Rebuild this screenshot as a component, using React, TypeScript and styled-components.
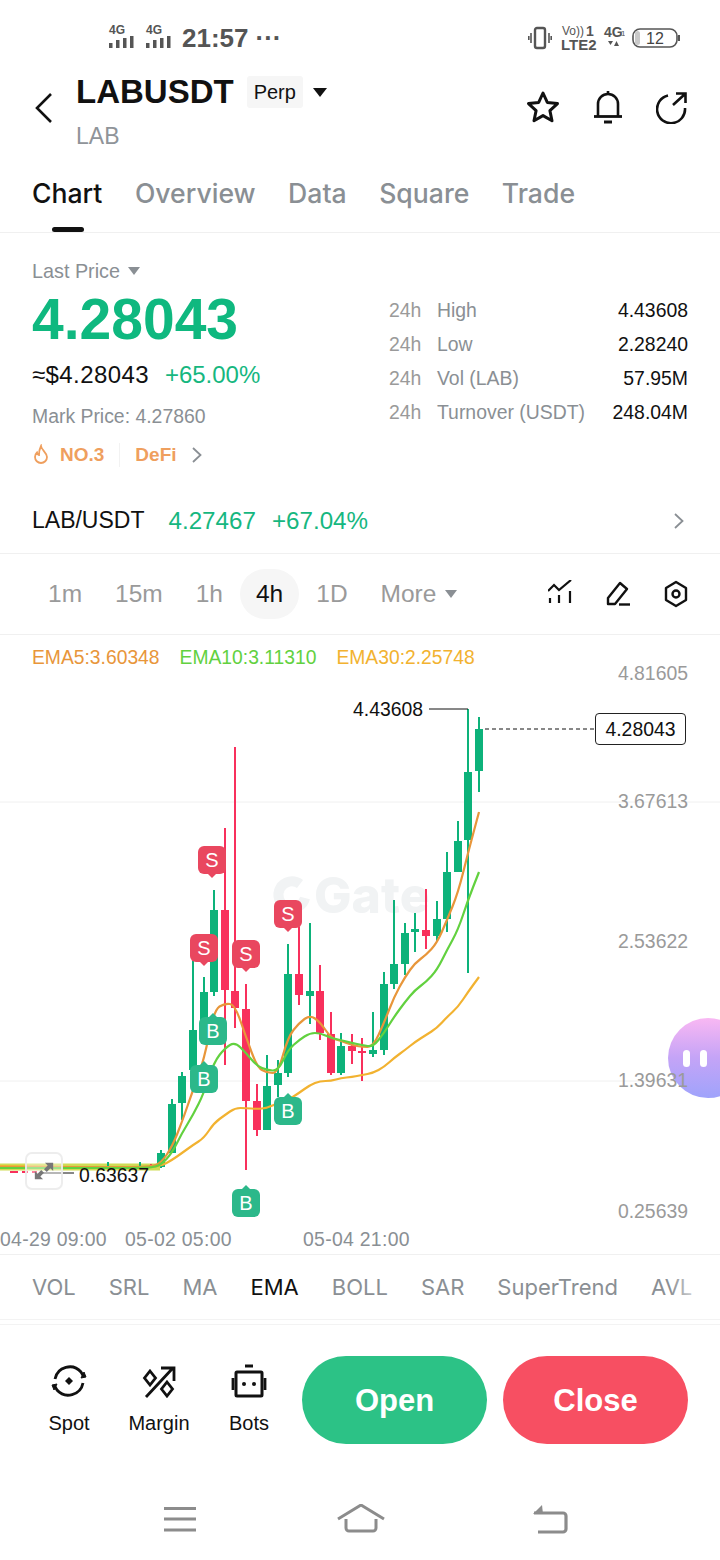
import React from "react";
import styled, { createGlobalStyle } from "styled-components";

const GlobalStyle = createGlobalStyle`
  html, body {
    margin: 0;
    padding: 0;
    background: #fff;
  }
  body {
    font-family: "Liberation Sans", Arial, sans-serif;
    color: #111;
  }
  * {
    box-sizing: border-box;
  }
`;

const Page = styled.div`
  width: 720px;
  height: 1560px;
  overflow: hidden;
  background: #fff;
`;

const StatusBar = styled.div`
  height: 70px;
  padding: 6px 40px 0 108px;
  display: flex;
  align-items: center;
  justify-content: space-between;
  color: #555;
`;

const StatusGroup = styled.div`
  display: flex;
  align-items: center;
  gap: 7px;
`;

const Clock = styled.span`
  font-size: 26px;
  font-weight: 700;
`;

const Header = styled.div`
  height: 92px;
  padding: 0 32px;
  display: flex;
  align-items: flex-start;
`;

const BackSlot = styled.div`
  width: 44px;
  padding-top: 22px;
`;

const TitleBlock = styled.div`
  flex: 1;
`;

const TitleRow = styled.div`
  display: flex;
  align-items: center;
  height: 44px;
`;

const Symbol = styled.span`
  font-size: 33px;
  font-weight: 700;
  margin-right: 13px;
`;

const PerpTag = styled.span`
  background: #f6f6f6;
  border-radius: 3px;
  padding: 0 7px;
  height: 32px;
  line-height: 32px;
  font-size: 20px;
  margin-right: 10px;
`;

const SubTitle = styled.div`
  font-size: 23px;
  color: #8f9499;
  margin-top: 9px;
`;

const HeaderActions = styled.div`
  display: flex;
  gap: 32px;
  padding-top: 20px;
`;

const Tabs = styled.div`
  height: 71px;
  padding: 0 32px;
  display: flex;
  gap: 32.5px;
  border-bottom: 1px solid #f0f0f0;
  font-family: Inter, "Liberation Sans", sans-serif;
`;

const Tab = styled.div<{ $active?: boolean }>`
  position: relative;
  font-size: 26.6px;
  font-weight: 500;
  line-height: 62px;
  color: ${(p) => (p.$active ? "#111" : "#8a8f94")};
  &::after {
    content: "";
    display: ${(p) => (p.$active ? "block" : "none")};
    position: absolute;
    left: 20px;
    bottom: 0;
    width: 32px;
    height: 5px;
    border-radius: 3px;
    background: #111;
  }
`;

const Summary = styled.div`
  height: 240px;
  padding: 26px 32px 0;
  display: flex;
  justify-content: space-between;
`;

const PriceCol = styled.div`
  display: flex;
  flex-direction: column;
`;

const LastPrice = styled.div`
  display: flex;
  align-items: center;
  gap: 8px;
  font-size: 19.8px;
  line-height: 24px;
  color: #8a8f94;
`;

const Caret = styled.span<{ $color?: string; $size?: number }>`
  display: inline-block;
  width: 0;
  height: 0;
  border-left: ${(p) => p.$size ?? 6}px solid transparent;
  border-right: ${(p) => p.$size ?? 6}px solid transparent;
  border-top: ${(p) => (p.$size ?? 6) + 2}px solid ${(p) => p.$color ?? "#8a8f94"};
`;

const BigPrice = styled.div`
  font-size: 57px;
  font-weight: 700;
  line-height: 70px;
  margin-top: 1px;
  color: #0fb87f;
`;

const UsdRow = styled.div`
  display: flex;
  gap: 16px;
  font-size: 24px;
  line-height: 30px;
  margin-top: 6px;
`;

const UsdValue = styled.span`
  letter-spacing: 0.4px;
`;

const Change = styled.span`
  color: #16b77f;
`;

const MarkPrice = styled.div`
  font-size: 19.4px;
  line-height: 24px;
  color: #8a8f94;
  margin-top: 14px;
`;

const TagRow = styled.div`
  display: flex;
  align-items: center;
  margin-top: 15px;
  height: 24px;
  color: #ef9f5e;
  font-size: 19px;
  font-weight: 700;
`;

const TagText = styled.span<{ $left?: number; $right?: number }>`
  margin-left: ${(p) => p.$left ?? 0}px;
  margin-right: ${(p) => p.$right ?? 0}px;
`;

const TagDivider = styled.span`
  width: 1px;
  height: 24px;
  background: #f2f2f2;
  margin: 0 15px;
`;

const StatsCol = styled.div`
  width: 299px;
  padding-top: 34px;
  display: flex;
  flex-direction: column;
`;

const StatRow = styled.div`
  height: 34px;
  display: flex;
  align-items: center;
  font-size: 19.4px;
`;

const StatPeriod = styled.span`
  width: 48px;
  color: #9a9a9a;
`;

const StatLabel = styled.span`
  flex: 1;
  color: #8a8f94;
`;

const StatValue = styled.span`
  color: #111;
`;

const SpotRow = styled.div`
  height: 81px;
  padding: 15px 32px 0;
  display: flex;
  align-items: center;
  font-size: 24.2px;
  border-bottom: 1px solid #f0f0f0;
`;

const SpotPair = styled.span`
  font-size: 23px;
  margin-right: 24px;
`;

const SpotValue = styled.span`
  color: #16b77f;
  margin-right: 16px;
`;

const SpotChevron = styled.div`
  margin-left: auto;
  margin-right: 3px;
  display: flex;
`;

const Intervals = styled.div`
  height: 81px;
  padding: 0 32px;
  display: flex;
  align-items: center;
  gap: 1px;
  border-bottom: 1px solid #f0f0f0;
`;

const Interval = styled.div<{ $active?: boolean }>`
  height: 50px;
  padding: 0 16px;
  line-height: 50px;
  border-radius: 25px;
  font-size: 24.5px;
  display: flex;
  align-items: center;
  gap: 9px;
  color: ${(p) => (p.$active ? "#111" : "#9a9a9a")};
  background: ${(p) => (p.$active ? "#f6f6f6" : "transparent")};
`;

const ChartTools = styled.div`
  margin-left: auto;
  display: flex;
  gap: 34px;
`;

const Chart = styled.div`
  position: relative;
  height: 620px;
  border-bottom: 1px solid #f0f0f0;
  overflow: hidden;
`;

const ChartSvg = styled.svg`
  position: absolute;
  left: 0;
  top: 0;
`;

const Legend = styled.div`
  position: absolute;
  left: 32px;
  top: 12px;
  display: flex;
  gap: 20px;
  font-size: 19.3px;
`;

const LegendItem = styled.span<{ $color: string }>`
  color: ${(p) => p.$color};
`;

const Watermark = styled.div`
  position: absolute;
  left: 314px;
  top: 232px;
  font-family: Inter, sans-serif;
  font-size: 50px;
  font-weight: 800;
  color: #f1f3f4;
  line-height: 56px;
`;

const AxisLabel = styled.div<{ $y: number }>`
  position: absolute;
  right: 32px;
  top: ${(p) => p.$y}px;
  font-size: 19.4px;
  line-height: 22px;
  color: #9a9a9a;
  z-index: 2;
`;

const DateLabel = styled.div<{ $x: number }>`
  position: absolute;
  left: ${(p) => p.$x}px;
  top: 593px;
  font-size: 19.4px;
  line-height: 22px;
  color: #8a8f94;
  letter-spacing: 0.3px;
`;

const PriceNote = styled.div<{ $x: number; $y: number }>`
  position: absolute;
  left: ${(p) => p.$x}px;
  top: ${(p) => p.$y}px;
  font-size: 19.4px;
  line-height: 22px;
  color: #111;
`;

const PriceTag = styled.div`
  position: absolute;
  left: 595px;
  top: 78px;
  width: 91px;
  height: 32px;
  border: 1px solid #222;
  border-radius: 4px;
  background: #fff;
  font-size: 19.4px;
  line-height: 30px;
  text-align: center;
`;

const Marker = styled.div<{ $x: number; $y: number; $kind: "S" | "B" }>`
  position: absolute;
  left: ${(p) => p.$x - 14}px;
  top: ${(p) => p.$y - 14}px;
  width: 28px;
  height: 28px;
  border-radius: 6px;
  background: ${(p) => (p.$kind === "S" ? "#e9475f" : "#2cb88a")};
  color: #fff;
  font-size: 20px;
  line-height: 28px;
  text-align: center;
  &::after {
    content: "";
    position: absolute;
    left: 10px;
    ${(p) => (p.$kind === "S" ? "top: 28px;" : "top: -4px;")}
    border-left: 4px solid transparent;
    border-right: 4px solid transparent;
    ${(p) =>
      p.$kind === "S"
        ? "border-top: 4px solid #e9475f;"
        : "border-bottom: 4px solid #2cb88a;"}
  }
`;

const ExpandButton = styled.div`
  position: absolute;
  left: 25px;
  top: 517px;
  width: 38px;
  height: 38px;
  border: 2px solid rgba(235, 235, 235, 0.9);
  border-radius: 7px;
  background: rgba(255, 255, 255, 0.4);
  display: flex;
  align-items: center;
  justify-content: center;
`;

const Bubble = styled.div`
  position: absolute;
  left: 668px;
  top: 383px;
  width: 80px;
  height: 80px;
  border-radius: 50%;
  background: linear-gradient(180deg, #f9b8f3 0%, #c4a4f7 50%, #9fa3fb 100%);
  display: flex;
  padding-left: 15px;
  gap: 10px;
  align-items: center;
`;

const BubbleEye = styled.span`
  width: 7px;
  height: 17px;
  border-radius: 4px;
  background: #fff;
`;

const Indicators = styled.div`
  height: 65px;
  padding: 0 0 0 32px;
  display: flex;
  align-items: center;
  gap: 33px;
  overflow: hidden;
  border-bottom: 1px solid #f3f3f3;
  font-family: Inter, "Liberation Sans", sans-serif;
  font-size: 22px;
  position: relative;
  &::after {
    content: "";
    position: absolute;
    right: 0;
    top: 0;
    width: 50px;
    height: 60px;
    background: linear-gradient(90deg, rgba(255, 255, 255, 0), #fff 80%);
  }
`;

const Indicator = styled.span<{ $active?: boolean }>`
  flex: none;
  color: ${(p) => (p.$active ? "#111" : "#8a8f94")};
`;

const Actions = styled.div`
  height: 180px;
  margin-top: 4px;
  border-top: 1px solid #f3f3f3;
  padding: 31px 32px 0 24px;
  display: flex;
  align-items: flex-start;
`;

const ToolList = styled.div`
  display: flex;
  width: 270px;
`;

const Tool = styled.div`
  width: 90px;
  padding-top: 8px;
  display: flex;
  flex-direction: column;
  align-items: center;
  gap: 14px;
  font-size: 20px;
  line-height: 22px;
`;

const TradeButton = styled.div<{ $color: string }>`
  width: 185px;
  height: 88px;
  border-radius: 44px;
  background: ${(p) => p.$color};
  color: #fff;
  font-size: 31px;
  font-weight: 700;
  line-height: 90px;
  text-align: center;
`;

const TradeButtons = styled.div`
  margin-left: 8px;
  display: flex;
  gap: 16px;
`;

const NavBar = styled.div`
  height: 56px;
  padding-left: 163px;
  display: grid;
  grid-template-columns: 174px 195px 36px;
`;

type Candle = [number, number, number, number, number, "g" | "r"];

const GREEN = "#0db27a";
const RED = "#f8305c";

const candles: Candle[] = [
  [161, 1150, 1168, 1153, 1167, "g"],
  [172, 1099, 1153, 1104, 1153, "g"],
  [182, 1072, 1120, 1076, 1103, "g"],
  [193, 961, 1075, 1030, 1070, "g"],
  [204, 977, 1030, 992, 1027, "g"],
  [214, 890, 996, 910, 992, "g"],
  [225, 828, 1065, 910, 990, "r"],
  [235, 747, 1028, 991, 1008, "r"],
  [246, 984, 1170, 1009, 1101, "r"],
  [257, 1084, 1136, 1101, 1130, "r"],
  [267, 1055, 1130, 1086, 1130, "g"],
  [278, 1060, 1097, 1073, 1085, "g"],
  [288, 944, 1077, 974, 1073, "g"],
  [299, 927, 1005, 974, 995, "r"],
  [310, 923, 1024, 991, 996, "g"],
  [320, 965, 1040, 991, 1033, "r"],
  [331, 1012, 1075, 1034, 1073, "r"],
  [341, 1033, 1075, 1046, 1073, "g"],
  [352, 1034, 1064, 1046, 1051, "r"],
  [362, 1038, 1081, 1051, 1053, "r"],
  [373, 1012, 1057, 1050, 1054, "g"],
  [384, 972, 1055, 984, 1050, "g"],
  [394, 900, 989, 964, 984, "g"],
  [405, 923, 975, 933, 964, "g"],
  [415, 913, 952, 929, 932, "g"],
  [426, 889, 949, 930, 936, "r"],
  [437, 901, 941, 919, 936, "g"],
  [447, 852, 932, 872, 919, "g"],
  [458, 821, 872, 841, 872, "g"],
  [468, 709, 973, 772, 840, "g"],
  [479, 717, 792, 729, 771, "g"],
];

const ema5 =
  "0,1167 100,1167 150,1167 161,1163 172,1147 182,1122 193,1090 204,1060 214,1010 225,1003 235,1005 246,1037 257,1067 267,1073 278,1073 288,1037 299,1023 310,1015 320,1022 331,1038 341,1041 352,1045 362,1047 373,1047 384,1023 394,997 405,977 415,963 426,955 437,943 447,920 458,893 468,853 479,812";
const ema10 =
  "0,1168 100,1168 150,1168 161,1165 172,1153 182,1133 193,1115 204,1093 214,1062 225,1048 235,1042 246,1053 257,1066 267,1070 278,1071 288,1050 299,1040 310,1033 320,1033 331,1038 341,1040 352,1043 362,1045 373,1047 384,1033 394,1017 405,1002 415,990 426,982 437,970 447,950 458,930 468,900 479,872";
const ema30 =
  "0,1166 100,1167 140,1168 161,1166 172,1160 182,1153 193,1145 204,1138 214,1123 225,1115 235,1108 246,1108 257,1109 267,1108 278,1103 288,1100 299,1093 310,1085 320,1081 331,1081 341,1078 352,1077 362,1075 373,1073 384,1067 394,1058 405,1050 415,1042 426,1035 437,1028 447,1017 458,1007 468,992 479,977";

// rounds the corners of a line through its segment midpoints
const smoothPath = (points: string) => {
  const pts = points.split(" ").map((p) => p.split(",").map(Number));
  let d = `M${pts[0][0]} ${pts[0][1]}`;
  for (let i = 1; i < pts.length - 1; i++) {
    const mx = (pts[i][0] + pts[i + 1][0]) / 2;
    const my = (pts[i][1] + pts[i + 1][1]) / 2;
    d += `Q${pts[i][0]} ${pts[i][1]} ${mx} ${my}`;
  }
  const last = pts[pts.length - 1];
  return `${d}L${last[0]} ${last[1]}`;
};

const markers: { x: number; y: number; kind: "S" | "B" }[] = [
  { x: 212, y: 225, kind: "S" },
  { x: 204, y: 313, kind: "S" },
  { x: 246, y: 319, kind: "S" },
  { x: 288, y: 279, kind: "S" },
  { x: 213, y: 396, kind: "B" },
  { x: 204, y: 444, kind: "B" },
  { x: 288, y: 476, kind: "B" },
  { x: 246, y: 568, kind: "B" },
];

const stats = [
  ["High", "4.43608"],
  ["Low", "2.28240"],
  ["Vol (LAB)", "57.95M"],
  ["Turnover (USDT)", "248.04M"],
];

const axis = [
  ["4.81605", 27],
  ["3.67613", 155],
  ["2.53622", 295],
  ["1.39631", 434],
  ["0.25639", 565],
] as const;

const indicators = ["VOL", "SRL", "MA", "EMA", "BOLL", "SAR", "SuperTrend", "AVL"];

const SignalBars = () => (
  <svg width="30" height="28" viewBox="0 0 30 28" fill="#555">
    <text x="1" y="10" fontSize="12" fontWeight="700" fontFamily="Liberation Sans, sans-serif">
      4G
    </text>
    <rect x="1" y="19" width="3.500" height="5" />
    <rect x="8" y="16" width="3.500" height="8" />
    <rect x="15" y="14" width="3.500" height="10" />
    <rect x="22" y="12" width="3.500" height="12" />
  </svg>
);

const Vibrate = () => (
  <svg width="24" height="24" viewBox="0 0 24 24" fill="none" stroke="#555" strokeWidth="2.400">
    <rect x="7" y="2" width="10" height="20" rx="2" />
    <path d="M3 7v10M.8 10v4M21 7v10M23.200 10v4" strokeWidth="1.600" />
  </svg>
);

const NetworkLabels = () => (
  <svg width="66" height="30" viewBox="0 0 66 30" fill="#555" fontFamily="Liberation Sans, sans-serif">
    <text x="3" y="12" fontSize="12">Vo))</text>
    <text x="27" y="13" fontSize="14" fontWeight="700">1</text>
    <text x="2" y="27" fontSize="15" fontWeight="700">LTE2</text>
    <text x="45" y="14" fontSize="14" fontWeight="700">4G</text>
    <text x="62" y="13" fontSize="8">1</text>
    <path d="M49 18h5l-2.500 4zM60 23h-5l2.500-5z" />
  </svg>
);

const Battery = () => (
  <svg width="48" height="24" viewBox="0 0 48 24" fill="none">
    <rect x="1" y="3" width="44" height="18" rx="7" stroke="#555" strokeWidth="1.600" />
    <rect x="3" y="5" width="5" height="14" rx="2.500" fill="#c9c9c9" />
    <path d="M47 9v6" stroke="#555" strokeWidth="2" />
    <text x="23" y="17.500" fontSize="16" textAnchor="middle" fill="#444" fontFamily="Liberation Sans, sans-serif">
      12
    </text>
  </svg>
);

const BackIcon = () => (
  <svg width="24" height="32" viewBox="0 0 24 32" fill="none" stroke="#111" strokeWidth="2.600">
    <path d="M19 2 5 16l14 14" />
  </svg>
);

const StarIcon = () => (
  <svg width="34" height="34" viewBox="0 0 34 34" fill="none" stroke="#111" strokeWidth="3" strokeLinejoin="round">
    <path d="M17 3l4.300 9.400 10.200 1.200-7.600 7 2.100 10.100L17 25.600 8 30.700l2.100-10.100-7.600-7 10.200-1.200z" />
  </svg>
);

const BellIcon = () => (
  <svg width="32" height="34" viewBox="0 0 32 34" fill="none" stroke="#111" strokeWidth="2.600">
    <path d="M6 26V14a10 10 0 0 1 20 0v12" />
    <path d="M2 26.500h28" strokeWidth="2.800" />
    <path d="M12 32h8" strokeWidth="3" />
    <path d="M16 1v3" />
  </svg>
);

const ShareIcon = () => (
  <svg width="32" height="34" viewBox="0 0 32 34" fill="none" stroke="#111" strokeWidth="2.600">
    <path d="M12 5.500A14 14 0 1 0 29 18" />
    <path d="M17 15 29 4M20 3.500h9.500V13" />
  </svg>
);

const FlameIcon = () => (
  <svg width="18" height="22" viewBox="0 0 18 22" fill="none" stroke="#ef9f5e" strokeWidth="1.800">
    <path d="M9 2c.5 4 5.500 6 6 11a6 6 0 0 1-12 0c0-2 1-3.500 2-4.500.3 1.500 1 2.300 2 2.500C7 8 7.500 5 9 2z" />
  </svg>
);

const Chevron = ({ color = "#8a8f94" }: { color?: string }) => (
  <svg width="12" height="18" viewBox="0 0 12 18" fill="none" stroke={color} strokeWidth="1.800">
    <path d="M2 2l7.500 7L2 16" />
  </svg>
);

const IndicatorIcon = () => (
  <svg width="24" height="24" viewBox="0 0 24 24" fill="none" stroke="#111" strokeWidth="2.200">
    <path d="M0 11l6-6 5 5 12-10" />
    <path d="M2 18v5M11 15v8M22 11v12" />
  </svg>
);

const PenIcon = () => (
  <svg width="24" height="26" viewBox="0 0 24 26" fill="none" stroke="#111" strokeWidth="2.400">
    <path d="M2 24v-6L14 3l7 6-12 15z" strokeLinejoin="round" />
    <path d="M13 24.500h11" />
  </svg>
);

const SettingsIcon = () => (
  <svg width="24" height="28" viewBox="0 0 24 28" fill="none" stroke="#111" strokeWidth="2.400">
    <path d="M12 2l10 6v12l-10 6-10-6V8z" strokeLinejoin="round" />
    <circle cx="12" cy="14" r="3.500" />
  </svg>
);

const ExpandIcon = () => (
  <svg width="22" height="22" viewBox="0 0 24 24" fill="#777">
    <path d="M13 3h9v9l-3-3-4 4-3-3 4-4zM11 21H2v-9l3 3 4-4 3 3-4 4z" />
  </svg>
);

const SpotIcon = () => (
  <svg width="36" height="34" viewBox="0 0 36 34" fill="none" stroke="#111" strokeWidth="2.800">
    <path d="M4 15A15 15 0 0 1 30 8l3 5" />
    <path d="M32 19A15 15 0 0 1 6 26l-3-5" />
    <path d="M30 14l5-1-2-5zM6 20l-5 1 2 5z" fill="#111" strokeWidth="1" />
    <path d="M18 13l4 4-4 4-4-4z" fill="#111" stroke="none" />
  </svg>
);

const MarginIcon = () => (
  <svg width="34" height="34" viewBox="0 -2 34 34" fill="none" stroke="#111" strokeWidth="2.800">
    <path d="M4 31 30 3M19 2h13v13" />
    <path d="M8 5l5.500 7L8 19l-5.500-7zM25 16l5.500 7-5.500 7-5.500-7z" />
  </svg>
);

const BotIcon = () => (
  <svg width="36" height="34" viewBox="0 0 36 34" fill="none" stroke="#111" strokeWidth="2.800">
    <path d="M14 2h8" strokeWidth="3" />
    <rect x="5" y="8" width="26" height="24" rx="1" strokeWidth="3" />
    <path d="M2 14v12M34 14v12" />
    <circle cx="13" cy="20" r="2" fill="#111" stroke="none" />
    <circle cx="23" cy="20" r="2" fill="#111" stroke="none" />
  </svg>
);

const MenuIcon = () => (
  <svg width="34" height="28" viewBox="0 0 34 28" fill="none" stroke="#8c8c8c" strokeWidth="3.200">
    <path d="M1 4.500h32M1 15h32M1 26h32" />
  </svg>
);

const HomeIcon = () => (
  <svg width="48" height="30" viewBox="0 0 48 30" fill="none" stroke="#8c8c8c" strokeWidth="3">
    <path d="M1 15 24 1l23 14" />
    <path d="M9 15v9a3 3 0 0 0 3 3h24a3 3 0 0 0 3-3v-9" />
  </svg>
);

const ReturnIcon = () => (
  <svg width="36" height="30" viewBox="0 0 36 30" fill="none" stroke="#8c8c8c" strokeWidth="3.200">
    <path d="M2 9h29a3 3 0 0 1 3 3v13a3 3 0 0 1-3 3H6" />
    <path d="M10 1 1 10h10z" fill="#8c8c8c" stroke="none" />
  </svg>
);

const App = () => {
  return (
    <Page>
      <GlobalStyle />
      <StatusBar>
        <StatusGroup>
          <SignalBars />
          <SignalBars />
          <Clock>21:57</Clock>
          <Clock>···</Clock>
        </StatusGroup>
        <StatusGroup>
          <Vibrate />
          <NetworkLabels />
          <Battery />
        </StatusGroup>
      </StatusBar>

      <Header>
        <BackSlot>
          <BackIcon />
        </BackSlot>
        <TitleBlock>
          <TitleRow>
            <Symbol>LABUSDT</Symbol>
            <PerpTag>Perp</PerpTag>
            <Caret $color="#111" $size={7} />
          </TitleRow>
          <SubTitle>LAB</SubTitle>
        </TitleBlock>
        <HeaderActions>
          <StarIcon />
          <BellIcon />
          <ShareIcon />
        </HeaderActions>
      </Header>

      <Tabs>
        <Tab $active>Chart</Tab>
        <Tab>Overview</Tab>
        <Tab>Data</Tab>
        <Tab>Square</Tab>
        <Tab>Trade</Tab>
      </Tabs>

      <Summary>
        <PriceCol>
          <LastPrice>
            Last Price <Caret />
          </LastPrice>
          <BigPrice>4.28043</BigPrice>
          <UsdRow>
            <UsdValue>≈$4.28043</UsdValue>
            <Change>+65.00%</Change>
          </UsdRow>
          <MarkPrice>Mark Price: 4.27860</MarkPrice>
          <TagRow>
            <FlameIcon />
            <TagText $left={10}>NO.3</TagText>
            <TagDivider />
            <TagText $right={14}>DeFi</TagText>
            <Chevron />
          </TagRow>
        </PriceCol>
        <StatsCol>
          {stats.map(([label, value]) => (
            <StatRow key={label}>
              <StatPeriod>24h</StatPeriod>
              <StatLabel>{label}</StatLabel>
              <StatValue>{value}</StatValue>
            </StatRow>
          ))}
        </StatsCol>
      </Summary>

      <SpotRow>
        <SpotPair>LAB/USDT</SpotPair>
        <SpotValue>4.27467</SpotValue>
        <SpotValue>+67.04%</SpotValue>
        <SpotChevron>
          <Chevron />
        </SpotChevron>
      </SpotRow>

      <Intervals>
        <Interval>1m</Interval>
        <Interval>15m</Interval>
        <Interval>1h</Interval>
        <Interval $active>4h</Interval>
        <Interval>1D</Interval>
        <Interval>
          More <Caret />
        </Interval>
        <ChartTools>
          <IndicatorIcon />
          <PenIcon />
          <SettingsIcon />
        </ChartTools>
      </Intervals>

      <Chart>
        <Watermark>Gate</Watermark>
        <ChartSvg width="720" height="620" viewBox="0 635 720 620">
          <path d="M0 802h720M0 1081h720" stroke="#f0f0f0" strokeWidth="1" />
          <path
            d="M300 884a13.500 13.500 0 1 0 5 14"
            fill="none"
            stroke="#f1f3f4"
            strokeWidth="10"
          />
          {candles.map(([x, wickTop, wickBottom, bodyTop, bodyBottom, dir]) => (
            <g key={x} fill={dir === "g" ? GREEN : RED}>
              <rect x={x - 1} y={wickTop} width="2" height={wickBottom - wickTop} />
              <rect x={x - 4} y={bodyTop} width="8" height={bodyBottom - bodyTop} />
            </g>
          ))}
          <path d="M0 1167h160" stroke="#cfdc55" strokeWidth="7" />
          <path d="M108 1162v5M140 1162v5" stroke={GREEN} strokeWidth="2" />
          <path d="M10 1172h8M22 1172h6M32 1172h5M150 1165h2" stroke={RED} strokeWidth="2" />
          <path d={smoothPath(ema30)} fill="none" stroke="#f2b230" strokeWidth="2.200" />
          <path d={smoothPath(ema5)} fill="none" stroke="#e8963a" strokeWidth="2.200" />
          <path d={smoothPath(ema10)} fill="none" stroke="#62d13f" strokeWidth="2.200" />
          <path d="M429 709h39M42 1173h32" stroke="#111" strokeWidth="1" />
          <path d="M485 729h110" stroke="#111" strokeWidth="1" strokeDasharray="4 3" />
        </ChartSvg>
        <Legend>
          <LegendItem $color="#e8963a">EMA5:3.60348</LegendItem>
          <LegendItem $color="#62d13f">EMA10:3.11310</LegendItem>
          <LegendItem $color="#f2b230">EMA30:2.25748</LegendItem>
        </Legend>
        <Bubble>
          <BubbleEye />
          <BubbleEye />
        </Bubble>
        {axis.map(([label, y]) => (
          <AxisLabel key={label} $y={y}>
            {label}
          </AxisLabel>
        ))}
        <DateLabel $x={0}>04-29 09:00</DateLabel>
        <DateLabel $x={125}>05-02 05:00</DateLabel>
        <DateLabel $x={303}>05-04 21:00</DateLabel>
        <PriceNote $x={353} $y={63}>
          4.43608
        </PriceNote>
        <PriceNote $x={79} $y={529}>
          0.63637
        </PriceNote>
        <PriceTag>4.28043</PriceTag>
        {markers.map((m) => (
          <Marker key={`${m.x}-${m.y}`} $x={m.x} $y={m.y} $kind={m.kind}>
            {m.kind}
          </Marker>
        ))}
        <ExpandButton>
          <ExpandIcon />
        </ExpandButton>
      </Chart>

      <Indicators>
        {indicators.map((name) => (
          <Indicator key={name} $active={name === "EMA"}>
            {name}
          </Indicator>
        ))}
      </Indicators>

      <Actions>
        <ToolList>
          <Tool>
            <SpotIcon />
            Spot
          </Tool>
          <Tool>
            <MarginIcon />
            Margin
          </Tool>
          <Tool>
            <BotIcon />
            Bots
          </Tool>
        </ToolList>
        <TradeButtons>
          <TradeButton $color="#2cc286">Open</TradeButton>
          <TradeButton $color="#f74f62">Close</TradeButton>
        </TradeButtons>
      </Actions>

      <NavBar>
        <MenuIcon />
        <HomeIcon />
        <ReturnIcon />
      </NavBar>
    </Page>
  );
};

export default App;
